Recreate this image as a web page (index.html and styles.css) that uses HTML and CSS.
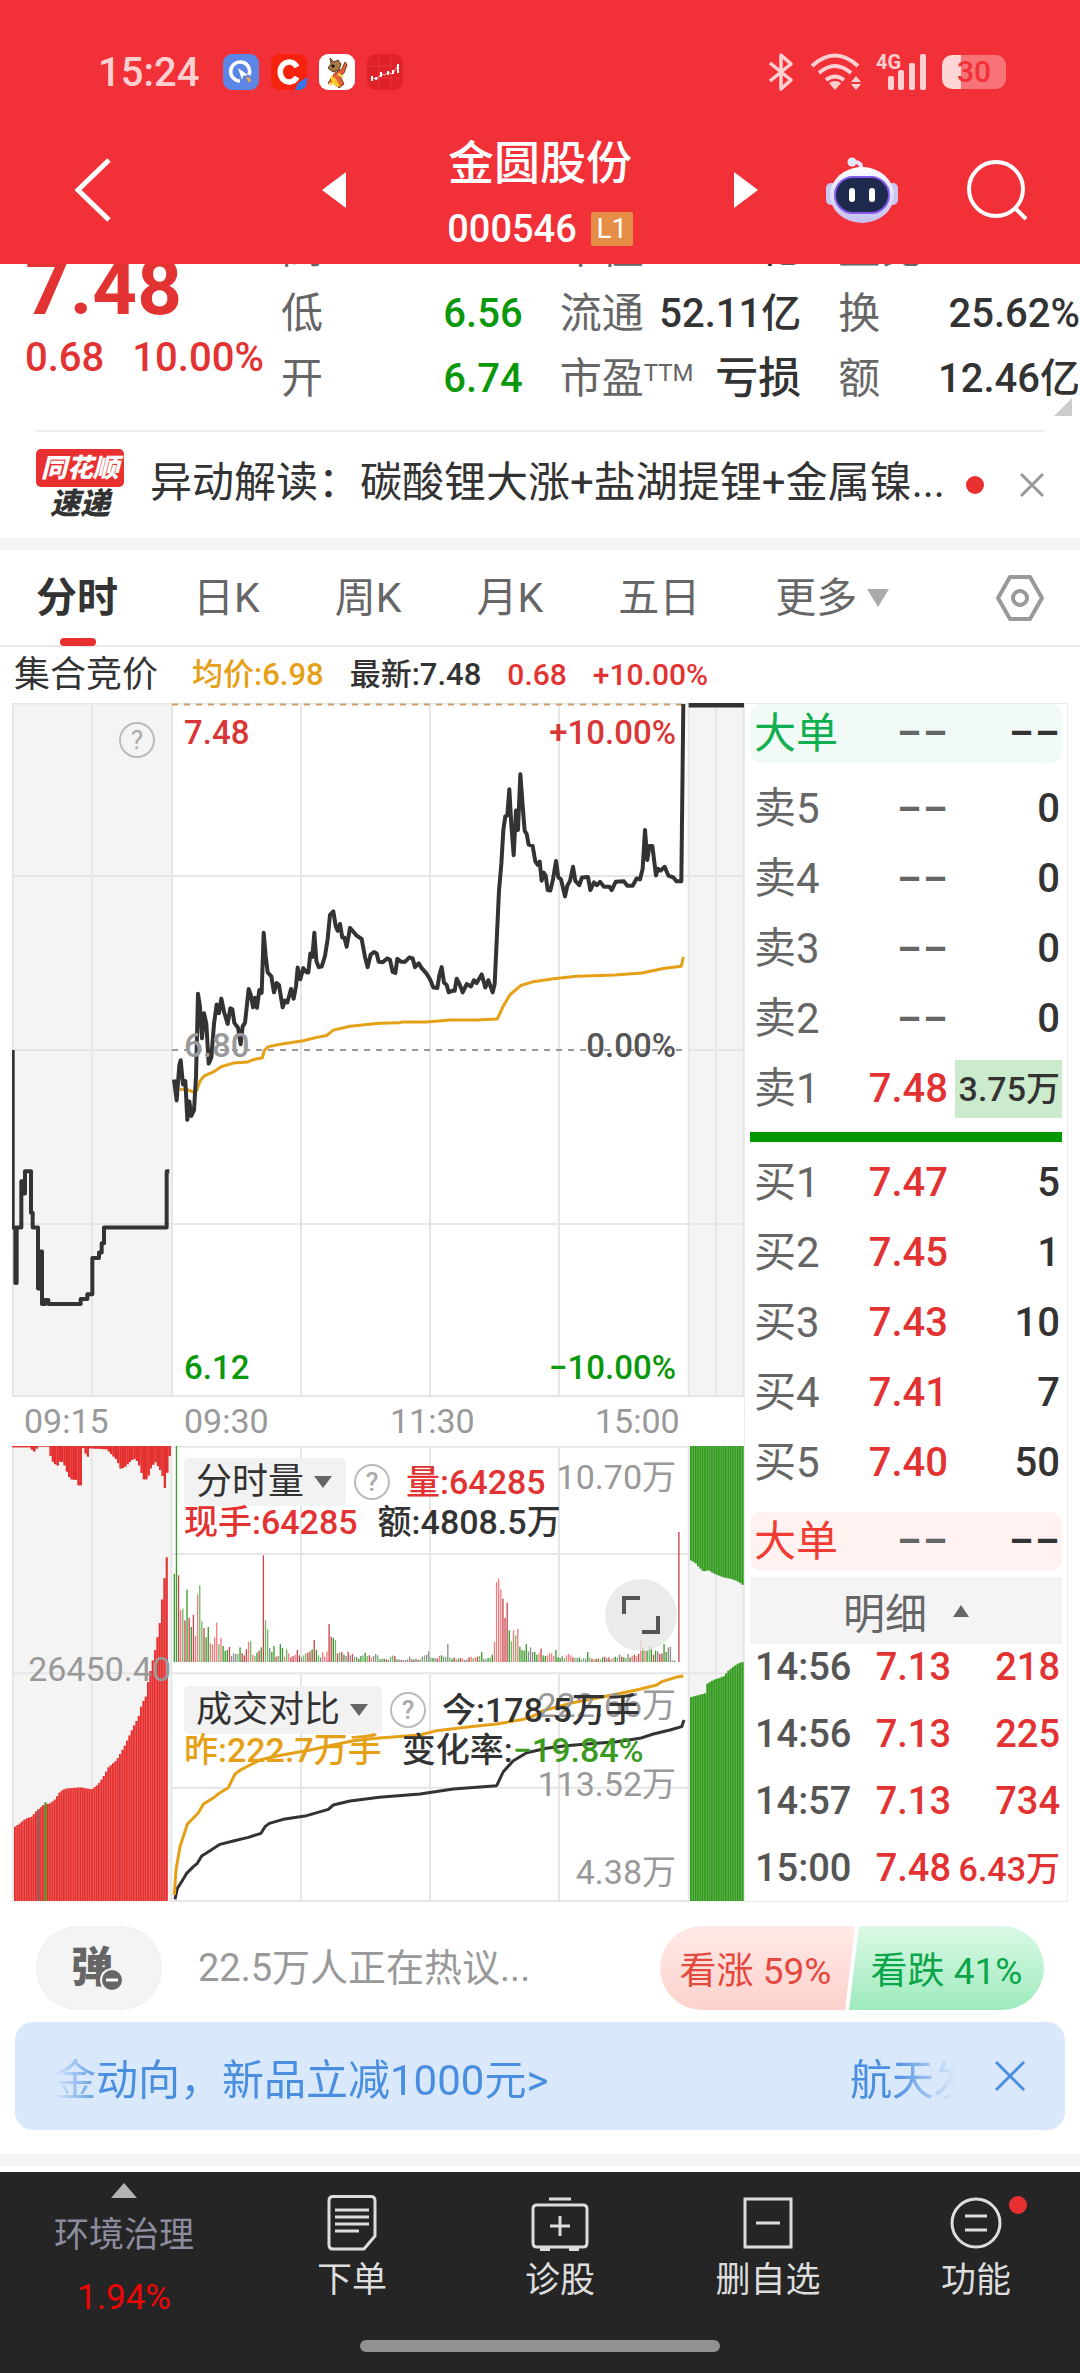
FILE: index.html
```html
<!DOCTYPE html>
<html lang="zh-CN">
<head>
	<meta charset="UTF-8">
	<meta name="viewport" content="width=device-width, initial-scale=1">
	<title>金圆股份 000546</title>
	<link rel="stylesheet" href="styles.css">
</head>
<body>
	<header class="header">
		<div class="status">
			<span class="clock">15:24</span>
			<svg class="app" viewBox="0 0 36 36"><rect width="36" height="36" rx="9" fill="#5b86e5"/><path d="M26 21A9.500 9.500 0 1 0 17 27" fill="none" stroke="#fff" stroke-width="3.500"/><path d="M15 14l10 7-5 1-1 4z" fill="#fff"/><path d="M23 23q5 0 5 3t-3 2z" fill="#e8a64e"/></svg>
			<svg class="app" viewBox="0 0 36 36"><rect width="36" height="36" rx="9" fill="#f5220d"/><path d="M26 13A9 10 0 1 0 26 23" fill="none" stroke="#fff" stroke-width="5.500"/><path d="M24 36l3-7 9-6v4q0 9-9 9z" fill="#3577e8"/></svg>
			<svg class="app" viewBox="0 0 36 36"><rect width="36" height="36" rx="9" fill="#fff"/><path d="M11 4l4 4 4-2 3 4-2 6-6 2-5-4 3-4z" fill="#a87846" stroke="#5b3a1d"/><path d="M16 19l7-4 3-7 2 3-3 8-4 3 4 8-5 4-5-7-3 4-3-2z" fill="#e8603a" stroke="#7a3a12"/><path d="M12 21l5 4 4 7-4 1-5-7z" fill="#ffc928"/><circle cx="14" cy="12" r="1.500"/><path d="M19 20l5 3M10 30l5-1" stroke="#ffd94d" stroke-width="2.500"/></svg>
			<svg class="app" viewBox="0 0 36 36"><rect width="36" height="36" rx="9" fill="#df2128"/><path d="M12 0v36M24 0v36M0 12h36M0 24h36" stroke="#e8454a" stroke-width=".6"/><path d="M5 24l5 1 4-5 4 1 3-3 4 2 3-4 3-4" fill="none" stroke="#ffb9ba"/><path d="M4 22h2v5H4zM8 23h2v3H8zM13 18h2v5h-2zM20 17h2v4h-2zM25 16h2v4h-2zM30 10h2v9h-2z" fill="#fff"/></svg>
			<div class="signals">
				<svg width="26" height="38" viewBox="0 0 26 38"><path d="M2 10l21 17-10 9V2l10 9L2 28" fill="none" stroke="#ffd0d1" stroke-width="3.500" stroke-linejoin="round"/></svg>
				<svg width="52" height="38" viewBox="0 0 52 38"><g fill="none" stroke="#ffd0d1" stroke-width="4"><path d="M2 13q23-21 46 0"/><path d="M9 20q16-14 32 0"/><path d="M16 27q9-7 18 0"/></g><path d="M25 37l-6-7q6-4 12 0zM46 23l5 6H41zM46 37l5-6H41z" fill="#ffd0d1"/></svg>
				<span class="cell"><small>4G</small><svg width="48" height="38" viewBox="0 0 48 38" fill="#ffd0d1"><rect x="10" y="23" width="6" height="14" rx="2"/><rect x="20" y="17" width="6" height="20" rx="2"/><rect x="31" y="10" width="6" height="27" rx="2"/><rect x="42" y="1" width="6" height="36" rx="2"/></svg></span>
				<span class="battery">30</span>
			</div>
		</div>
		<nav class="top-nav">
			<button class="icon-btn back" aria-label="返回"><svg width="38" height="66" viewBox="0 0 38 66"><path d="M35 3L4 33l31 30" fill="none" stroke="#fff" stroke-width="5"/></svg></button>
			<div class="switcher">
				<button class="icon-btn" aria-label="上一只"><svg width="24" height="36"><path d="M24 0v36L0 18z" fill="#fff"/></svg></button>
				<div class="stock">
					<h1>金圆股份</h1>
					<p>000546 <span class="badge">L1</span></p>
				</div>
				<button class="icon-btn" aria-label="下一只"><svg width="24" height="36"><path d="M0 0v36l24-18z" fill="#fff"/></svg></button>
			</div>
			<div class="actions">
				<button class="icon-btn" aria-label="智能助手"><svg width="72" height="66" viewBox="0 0 72 66">
					<defs><linearGradient id="shell" x2="0" y2="1"><stop stop-color="#fff"/><stop offset="1" stop-color="#c3c0ef"/></linearGradient></defs>
					<path d="M35 12q1-7-7-7" fill="none" stroke="#e6e4f8" stroke-width="4"/><circle cx="26" cy="5" r="4.500" fill="#e9e8fb"/>
					<rect x="0" y="26" width="10" height="22" rx="5" fill="#c9c7f2"/><rect x="62" y="26" width="10" height="22" rx="5" fill="#c9c7f2"/>
					<ellipse cx="36" cy="38" rx="32" ry="28" fill="url(#shell)"/>
					<rect x="9" y="20" width="54" height="36" rx="18" fill="#1e2a4d" stroke="#8659ee" stroke-width="2"/>
					<path d="M26 34v8M46 34v8" stroke="#fff" stroke-width="6" stroke-linecap="round"/>
				</svg></button>
				<button class="icon-btn" aria-label="搜索"><svg width="62" height="62" viewBox="0 0 62 62" fill="none" stroke="#fff" stroke-width="4"><circle cx="30" cy="30" r="27"/><path d="M49 49l11 11"/></svg></button>
			</div>
		</nav>
	</header>

	<section class="quote">
		<div class="price">
			<strong>7.48</strong>
			<p><span>0.68</span><span>10.00%</span></p>
		</div>
		<dl class="stats">
			<div><dt>高</dt><dd class="up">7.48</dd></div>
			<div><dt>市值</dt><dd>58.28亿</dd></div>
			<div><dt>量比</dt><dd class="up">1.30</dd></div>
			<div><dt>低</dt><dd class="down">6.56</dd></div>
			<div><dt>流通</dt><dd>52.11亿</dd></div>
			<div><dt>换</dt><dd>25.62%</dd></div>
			<div><dt>开</dt><dd class="down">6.74</dd></div>
			<div><dt>市盈<sup>TTM</sup></dt><dd class="loss">亏损</dd></div>
			<div><dt>额</dt><dd>12.46亿</dd></div>
		</dl>
		<i class="corner"></i>
	</section>

	<section class="news">
		<div class="logo"><b>同花顺</b><em>速递</em></div>
		<a href="#">异动解读：碳酸锂大涨+盐湖提锂+金属镍...</a>
		<i class="dot"></i>
		<button class="icon-btn" aria-label="关闭"><svg width="24" height="24"><path d="M1 1l22 22M23 1L1 23" stroke="#999" stroke-width="3"/></svg></button>
	</section>

	<nav class="tabs">
		<a href="#" class="active">分时</a>
		<a href="#">日K</a>
		<a href="#">周K</a>
		<a href="#">月K</a>
		<a href="#">五日</a>
		<a href="#" class="more">更多</a>
		<button class="icon-btn setting" aria-label="设置"><svg width="48" height="46" viewBox="0 0 48 46" fill="none" stroke="#999" stroke-width="4" stroke-linejoin="round"><path d="M14 2h20l12 21-12 21H14L2 23z"/><circle cx="24" cy="23" r="7"/></svg></button>
	</nav>

	<p class="summary">
		<span class="auction">集合竞价</span>
		<span class="avg">均价:6.98</span>
		<span>最新:7.48</span>
		<span class="up">0.68</span>
		<span class="up">+10.00%</span>
	</p>

	<main class="board">
		<section class="charts">
			<div class="plot price-plot">
				<svg id="priceChart" viewBox="36 28 2196 1432" preserveAspectRatio="none">
					<path class="shade" d="M36 28H516V1460H36zM2066 28H2232V1460H2066z"/>
					<path class="grid" d="M38 28V1460M275 28V1460M516 28V1460M903 28V1460M1290 28V1460M1677 28V1460M2066 28V1460M2148 28V1460M2230 28V1460M36 29H2232M36 385H2232M36 744H516M2066 744H2232M36 1103H2232M36 1458H2232"/>
					<path class="limit" d="M516 31H2046"/>
					<path class="zero" d="M516 744H2046"/>
					<path class="line" d="M38 744V1110H46V1225H50V1110H64V1015H68V1040H75V994H93V1080H98V1110H114V1236H122V1160H126V1268H135V1260H145V1268H242V1258H262V1248H277V1173H297V1162H305V1143H312V1110H500V994H508"/>
					<path class="line top" d="M2066 31H2232"/>
				</svg>
				<span class="tag tl up">7.48</span>
				<span class="tag tr up">+10.00%</span>
				<span class="tag ml">6.80</span>
				<span class="tag mr">0.00%</span>
				<span class="tag bl down">6.12</span>
				<span class="tag br down">−10.00%</span>
				<button class="help auction-help" aria-label="说明">?</button>
			</div>
			<div class="times"><span>09:15</span><span>09:30</span><span>11:30</span><span>15:00</span></div>
			<div class="plot index-plot">
				<svg id="indexChart" viewBox="36 48 2196 1368">
					<path class="shade" d="M36 48H516V1416H36zM2064 48H2232V1416H2064z"/>
					<path class="grid" d="M38 48V1416M275 48V1416M514 48V1416M903 48V696M1290 48V696M1677 48V696M903 733V1416M1290 733V1416M1677 733V1416M2066 48V1416M2148 48V1416M2230 48V1416M36 50H2232M516 372H2064M36 730H2232M516 1073H2064M516 1413H2064"/>
				</svg>
				<span class="tag auction-value">26450.40</span>
				<div class="panel volume">
					<p><button class="picker">分时量</button><button class="help" aria-label="说明">?</button><span class="up">量:64285</span></p>
					<p><span class="up">现手:64285</span><span>额:4808.5万</span></p>
					<span class="tag scale-top">10.70万</span>
					<button class="expand" aria-label="放大"><svg width="38" height="38" fill="none" stroke="#555" stroke-width="4"><path d="M2 18V2h16M36 20v16H20"/></svg></button>
				</div>
				<div class="panel compare">
					<span class="tag scale-top">222.66万</span>
					<span class="tag scale-mid">113.52万</span>
					<span class="tag scale-low">4.38万</span>
					<p><button class="picker">成交对比</button><button class="help" aria-label="说明">?</button><span>今:178.5万手</span></p>
					<p><span class="avg">昨:222.7万手</span><span>变化率:<b>−19.84%</b></span></p>
				</div>
			</div>
		</section>

		<section class="book">
			<table class="big sell"><tr><th>大单</th><td class="none">−−</td><td class="none">−−</td></tr></table>
			<table class="sells">
				<tr><th>卖5</th><td class="none">−−</td><td>0</td></tr>
				<tr><th>卖4</th><td class="none">−−</td><td>0</td></tr>
				<tr><th>卖3</th><td class="none">−−</td><td>0</td></tr>
				<tr><th>卖2</th><td class="none">−−</td><td>0</td></tr>
				<tr><th>卖1</th><td>7.48</td><td><span class="hot">3.75万</span></td></tr>
			</table>
			<div class="ratio"></div>
			<table class="buys">
				<tr><th>买1</th><td>7.47</td><td>5</td></tr>
				<tr><th>买2</th><td>7.45</td><td>1</td></tr>
				<tr><th>买3</th><td>7.43</td><td>10</td></tr>
				<tr><th>买4</th><td>7.41</td><td>7</td></tr>
				<tr><th>买5</th><td>7.40</td><td>50</td></tr>
			</table>
			<table class="big buy"><tr><th>大单</th><td class="none">−−</td><td class="none">−−</td></tr></table>
			<button class="detail">明细</button>
			<table class="trades">
				<tr><th>14:56</th><td>7.13</td><td>218</td></tr>
				<tr><th>14:56</th><td>7.13</td><td>225</td></tr>
				<tr><th>14:57</th><td>7.13</td><td>734</td></tr>
				<tr><th>15:00</th><td>7.48</td><td><small>6.43万</small></td></tr>
			</table>
		</section>
	</main>

	<section class="talk">
		<button class="danmu" aria-label="弹幕">弹<svg width="24" height="24"><circle cx="12" cy="12" r="11" fill="#666" stroke="#f4f4f4" stroke-width="2"/><path d="M6 12h12" stroke="#fff" stroke-width="3"/></svg></button>
		<input type="text" aria-label="评论" placeholder="22.5万人正在热议...">
		<div class="vote">
			<button class="rise">看涨 59%</button>
			<button class="fall">看跌 41%</button>
		</div>
	</section>

	<section class="notice">
		<div class="marquee"><a href="#">金动向，新品立减1000元&gt;</a><a href="#">航天发</a></div>
		<button class="icon-btn" aria-label="关闭"><svg width="32" height="32"><path d="M2 2l28 28M30 2L2 30" stroke="#4a8fdf" stroke-width="3"/></svg></button>
	</section>

	<footer class="footer">
		<nav class="bottom-nav">
			<a href="#" class="sector"><i></i><span>环境治理</span><b>1.94%</b></a>
			<a href="#"><svg width="50" height="56" viewBox="0 0 50 56"><path d="M6 1.500h38q4 0 4 4V41L37 54H6q-4 0-4-4V5.500q0-4 4-4z"/><path d="M8 15h34M8 22h34M8 29h34M8 36h24"/></svg>下单</a>
			<a href="#"><svg width="58" height="56" viewBox="0 0 58 56"><path d="M18 4h22M6 10h46q4 0 4 4v34q0 4-4 4H6q-4 0-4-4V14q0-4 4-4zM29 21v20M19 31h20"/><path d="M9 54h10M38 54h10" stroke-width="4"/></svg>诊股</a>
			<a href="#"><svg width="50" height="56" viewBox="0 0 50 56"><path d="M2 4h46v48H2zM13 28h24"/></svg>删自选</a>
			<a href="#" class="func"><svg width="52" height="56" viewBox="0 0 52 56"><circle cx="26" cy="28" r="24"/><path d="M15 21h22M15 35h22"/></svg>功能<i class="dot"></i></a>
		</nav>
		<div class="home-bar"></div>
	</footer>
	<script src="chart.js"></script>
</body>
</html>
```
FILE: styles.css
```css
*{
	padding:0;
	margin:0;
	box-sizing:border-box;
}
body{
	background:#fff;
	color:#333;
	font-family:Roboto,"Noto Sans CJK SC",sans-serif;
	font-size:36px;
	overflow-x:hidden;
}
a{
	color:inherit;
	text-decoration:none;
}
button,input{
	font:inherit;
	color:inherit;
	border:none;
	background:none;
	outline:none;
}
svg{
	display:block;
}
.icon-btn{
	display:block;
	flex:none;
}
.up{
	color:#e33232;
}
.down{
	color:#099809;
}
.avg{
	color:#e6a017;
}
.dot{
	width:18px;
	height:18px;
	border-radius:50%;
	background:#e93030;
	flex:none;
}

/* header */
.header{
	position:relative;
	z-index:2;
	background:#f23037;
	color:#fff;
}
.status{
	display:flex;
	align-items:center;
	gap:12px;
	height:116px;
	padding:28px 74px 0 98px;
}
.clock{
	font-size:40px;
	font-weight:500;
	color:#ffd0d1;
	margin-right:12px;
}
.app{
	width:36px;
	height:36px;
}
.signals{
	display:flex;
	align-items:center;
	gap:16px;
	margin-left:auto;
}
.cell{
	position:relative;
}
.cell small{
	position:absolute;
	left:-2px;
	top:0;
	font-size:20px;
	line-height:18px;
	font-weight:700;
	color:#ffd0d1;
}
.battery{
	width:64px;
	height:34px;
	line-height:34px;
	border-radius:10px;
	background:linear-gradient(90deg,#ffd5d6 30%,#f77377 30%);
	color:#f23037;
	font-size:30px;
	font-weight:500;
	text-align:center;
}
.top-nav{
	display:grid;
	grid-template-columns:1fr 436px 1fr;
	align-items:center;
	height:148px;
	padding:0 52px 0 74px;
}
.switcher{
	display:flex;
	justify-content:space-between;
	align-items:center;
	margin-left:-11px;
	margin-right:11px;
}
.stock{
	padding-top:12px;
	text-align:center;
}
.stock h1{
	font-size:46px;
	line-height:66px;
	font-weight:500;
}
.stock p{
	display:flex;
	align-items:center;
	justify-content:center;
	gap:14px;
	font-size:38px;
	line-height:66px;
	font-weight:500;
}
.badge{
	width:42px;
	height:34px;
	line-height:34px;
	background:#e68d47;
	border-radius:2px;
	font-size:28px;
	font-weight:400;
}
.actions{
	display:flex;
	justify-content:flex-end;
	align-items:center;
	gap:68px;
}

/* quote */
.quote{
	position:relative;
	display:flex;
	margin-top:-48px;
	padding-bottom:19px;
}
.price{
	width:281px;
	padding:30px 0 0 25px;
	color:#e33232;
}
.price strong{
	display:block;
	font-size:78px;
	line-height:84px;
	font-weight:700;
}
.price p{
	display:flex;
	gap:28px;
	font-size:40px;
	line-height:56px;
	font-weight:500;
}
.stats{
	flex:1;
	display:grid;
	grid-template-columns:repeat(3,1fr);
	column-gap:37px;
	white-space:nowrap;
}
.stats div{
	display:flex;
	justify-content:space-between;
	font-size:42px;
	line-height:65px;
}
.stats dt{
	color:#666;
}
.stats dd{
	font-size:40px;
	font-weight:500;
}
.stats .loss{
	font-size:43px;
}
.stats sup{
	font-size:24px;
	line-height:24px;
	vertical-align:12px;
}
.corner{
	position:absolute;
	right:8px;
	bottom:14px;
	border-left:18px solid transparent;
	border-bottom:18px solid #ccc;
}

/* news */
.news{
	display:flex;
	align-items:center;
	height:108px;
	margin:0 36px;
	border-top:2px solid #eee;
}
.news a{
	flex:1;
	white-space:nowrap;
	font-size:42px;
	line-height:60px;
	padding-bottom:4px;
}
.news .icon-btn{
	margin-left:36px;
}
.logo{
	width:88px;
	margin-right:26px;
	text-align:center;
	font-weight:900;
	font-style:italic;
}
.logo b{
	display:block;
	background:#e83030;
	color:#fff;
	border-radius:5px;
	font-size:26px;
	line-height:38px;
	font-weight:900;
}
.logo em{
	display:block;
	font-size:30px;
	line-height:34px;
}

/* tabs */
.tabs{
	display:flex;
	align-items:center;
	gap:75px;
	height:109px;
	padding:0 36px;
	border-top:12px solid #f4f4f4;
	border-bottom:2px solid #e8e8e8;
	font-size:41px;
	line-height:96px;
	color:#666;
}
.tabs .active{
	position:relative;
	color:#333;
	font-weight:700;
}
.tabs .active::after{
	content:"";
	position:absolute;
	left:24px;
	bottom:0;
	width:36px;
	height:8px;
	border-radius:4px;
	background:#e93030;
}
.more{
	display:flex;
	align-items:center;
	gap:10px;
}
.more::after{
	content:"";
	border:11px solid transparent;
	border-top:18px solid #aaa;
	border-bottom:0;
}
.setting{
	margin-left:auto;
}

.summary{
	display:flex;
	gap:26px;
	padding-left:14px;
	font-size:31px;
	line-height:56px;
	font-weight:500;
}
.summary .up{
	font-size:30px;
}
.auction{
	font-size:36px;
	font-weight:400;
	margin-right:8px;
}

/* charts */
.board{
	display:grid;
	grid-template-columns:732fr 324fr;
	margin:0 12px;
}
.charts,.book{
	min-width:0;
}
.plot{
	position:relative;
}
.plot > svg{
	width:100%;
}
#priceChart{
	height:694px;
}
.shade{
	fill:#f4f4f4;
}
.grid,.line,.avg-line,.limit,.zero{
	fill:none;
	vector-effect:non-scaling-stroke;
	stroke-linejoin:round;
}
.grid{
	stroke:#e6e6e6;
	stroke-width:2px;
}
.line{
	stroke:#333;
	stroke-width:4px;
}
#indexChart .line{
	stroke-width:3px;
}
#priceChart .top{
	stroke-width:6px;
}
.avg-line{
	stroke:#e6a017;
	stroke-width:3px;
}
.limit{
	stroke:#c9a067;
	stroke-width:2px;
	stroke-dasharray:6 6;
}
.zero{
	stroke:#999;
	stroke-width:2px;
	stroke-dasharray:6 6;
}
.tag{
	position:absolute;
	font-size:34px;
	line-height:40px;
	color:#999;
}
.price-plot .tag{
	font-size:33px;
	font-weight:500;
}
.price-plot .up{
	color:#d93636;
}
.price-plot .down{
	color:#099809;
}
.tl,.ml,.bl{
	left:172px;
}
.tr,.mr,.br{
	right:68px;
}
.tl,.tr{
	top:10px;
}
.ml,.mr{
	top:323px;
}
.bl,.br{
	bottom:9px;
}
.price-plot .mr{
	color:#555;
}
.help{
	width:36px;
	height:36px;
	line-height:32px;
	border:2px solid #bbb;
	border-radius:50%;
	color:#aaa;
	font-size:26px;
	text-align:center;
}
.auction-help{
	position:absolute;
	left:107px;
	top:19px;
}
.times{
	display:grid;
	grid-template-columns:172fr 206fr 205fr 149fr;
	font-size:34px;
	line-height:49px;
	color:#999;
}
.times span:first-child{
	padding-left:12px;
}
.auction-value{
	right:573px;
	top:203px;
}
.panel{
	position:absolute;
	left:162px;
	right:56px;
	padding:12px 0 0 10px;
	font-weight:500;
}
.volume{
	top:0;
	height:216px;
}
.compare{
	top:228px;
	height:228px;
}
.panel p{
	position:relative;
	display:flex;
	align-items:center;
	gap:20px;
	line-height:40px;
	height:32px;
	font-size:34px;
	white-space:nowrap;
}
.panel p:first-of-type{
	height:48px;
}
.panel p b{
	color:#3a9b1f;
	font-weight:500;
}
.picker{
	display:flex;
	align-items:center;
	gap:10px;
	height:48px;
	padding:0 14px 0 12px;
	border-radius:5px;
	background:#f2f2f2;
	font-size:36px;
	font-weight:400;
}
.picker::after{
	content:"";
	border:9px solid transparent;
	border-top:12px solid #666;
	border-bottom:0;
}
.picker + .help{
	margin-left:-12px;
}
.panel .help + span{
	margin-left:-4px;
}
.scale-top,.scale-mid,.scale-low{
	right:12px;
	font-weight:400;
}
.scale-top{
	top:11px;
}
.scale-mid{
	top:90px;
}
.scale-low{
	top:178px;
}
.expand{
	position:absolute;
	right:11px;
	bottom:11px;
	width:72px;
	height:72px;
	padding:17px;
	border-radius:50%;
	background:rgba(230,230,230,.8);
}

/* order book */
.book{
	border:1px solid #eaeaea;
	padding:0 5px;
}
.book table{
	width:100%;
	border-collapse:collapse;
	table-layout:fixed;
	font-size:40px;
	font-weight:500;
}
.book th{
	width:92px;
	padding-left:4px;
	text-align:left;
	font-size:42px;
	font-weight:400;
	color:#666;
	white-space:nowrap;
}
.book td{
	padding-right:2px;
	text-align:right;
	white-space:nowrap;
}
.book td:nth-child(2){
	width:108px;
	color:#e33232;
}
.book .none:nth-child(2){
	color:#666;
}
.none{
	font-size:46px;
}
.book .big{
	border-radius:12px;
	line-height:59px;
}
.big.sell{
	background:#f1faf6;
	margin-bottom:11px;
}
.big.buy{
	background:#fff2f1;
	margin:14px 0 6px;
}
.big.sell th{
	color:#10b050;
}
.big.buy th{
	color:#f03c32;
}
.sells tr,.buys tr{
	height:70px;
	line-height:58px;
}
.hot{
	display:block;
	margin:0 -2px 0 5px;
	padding-right:2px;
	background:#cceacc;
	font-size:34px;
}
.ratio{
	height:10px;
	margin:8px 0 6px;
	background:#009800;
}
.detail{
	display:flex;
	align-items:center;
	justify-content:center;
	gap:26px;
	width:100%;
	height:67px;
	background:#f4f4f4;
	color:#666;
	font-size:42px;
}
.detail::after{
	content:"";
	border:8px solid transparent;
	border-bottom:12px solid #666;
	border-top:0;
}
.trades tr{
	height:67px;
	line-height:46px;
	vertical-align:top;
}
.book .trades{
	font-size:38px;
	margin-bottom:-16px;
}
.book .trades th{
	width:100px;
	padding-left:5px;
	font-size:38px;
	color:#555;
	font-weight:500;
}
.book .trades td{
	color:#e33232;
}
.book .trades td:nth-child(2){
	width:103px;
}
.trades small{
	font-size:34px;
}

/* talk */
.talk{
	display:flex;
	align-items:center;
	gap:36px;
	padding:24px 36px 12px;
}
.danmu{
	position:relative;
	width:126px;
	height:84px;
	border:1px solid #eee;
	border-radius:42px;
	background:#f4f4f4;
	color:#666;
	font-size:42px;
	font-weight:900;
	line-height:80px;
	padding-right:14px;
}
.danmu svg{
	position:absolute;
	left:63px;
	top:41px;
}
.talk input{
	flex:1;
	min-width:0;
	font-size:38px;
	height:60px;
}
.talk input::placeholder{
	color:#999;
}
.vote{
	display:flex;
	width:384px;
	height:84px;
	border-radius:42px;
	overflow:hidden;
	font-size:37px;
	white-space:nowrap;
}
.rise{
	width:195px;
	margin-right:-6px;
	padding-right:4px;
	background:linear-gradient(#ffeae8,#fdd2cc);
	color:#e5493e;
	clip-path:polygon(0 0,100% 0,185px 100%,0 100%);
}
.fall{
	flex:1;
	background:linear-gradient(#dbf9e6,#9eebbd);
	color:#0ba54a;
	clip-path:polygon(10px 0,100% 0,100% 100%,0 100%);
}

/* notice */
.notice{
	display:flex;
	align-items:center;
	height:108px;
	margin:0 15px 24px;
	padding:0 39px;
	border-radius:18px;
	background:#dae8fb;
	color:#4a8fdf;
	font-size:42px;
}
.marquee{
	flex:1;
	display:flex;
	justify-content:space-between;
	margin-right:40px;
	overflow:hidden;
	white-space:nowrap;
	-webkit-mask-image:linear-gradient(90deg,transparent,#000 50px,#000 calc(100% - 60px),transparent);
	mask-image:linear-gradient(90deg,transparent,#000 50px,#000 calc(100% - 60px),transparent);
}
.marquee a:last-child{
	margin-right:-22px;
}

/* footer */
.footer{
	border-top:12px solid #f4f4f4;
}
.bottom-nav{
	display:grid;
	grid-template-columns:248fr 208fr 208fr 208fr 208fr;
	height:168px;
	margin-top:6px;
	background:#252525;
	color:#ddd;
	font-size:35px;
}
.bottom-nav a{
	position:relative;
	display:flex;
	flex-direction:column;
	align-items:center;
	padding-top:23px;
	line-height:56px;
}
.bottom-nav svg{
	fill:none;
	stroke:#ddd;
	stroke-width:3px;
	margin-bottom:2px;
}
.bottom-nav .sector{
	padding-top:11px;
	color:#8c8c9f;
}
.sector i{
	border:13px solid transparent;
	border-bottom:15px solid #b4b4b4;
	border-top:0;
	margin-bottom:10px;
}
.sector b{
	color:#f00505;
	font-weight:400;
	line-height:68px;
}
.func .dot{
	position:absolute;
	top:24px;
	left:calc(50% + 33px);
}
.home-bar{
	height:33px;
	background:#252525;
}
.home-bar::before{
	content:"";
	display:block;
	width:360px;
	height:12px;
	margin:0 auto;
	border-radius:6px;
	background:#919191;
}
```
FILE: chart.js
```js
var NS='http://www.w3.org/2000/svg',
	priceChart=document.getElementById('priceChart'),
	indexChart=document.getElementById('indexChart');

// 坐标都是 x,y 连写
var avg='540,826 556,824 580,831 590,828 600,808 612,798 643,788 665,778 700,771 742,769 760,764 787,760 793,745 805,737 850,731 910,725 950,718 980,714 1000,703 1050,695 1138,689 1198,688 1206,686 1278,686 1352,682 1430,682 1492,680 1510,653 1530,630 1562,611 1600,603 1660,597 1730,592 1845,589 1925,585 1990,576 2044,571 2050,552';
var price='522,805 530,848 538,775 542,765 549,815 556,808 562,888 568,850 574,880 582,868 588,800 594,628 600,655 606,720 612,668 619,690 626,772 634,760 642,690 650,650 657,668 664,638 672,665 683,690 691,658 697,660 703,688 714,698 722,732 728,695 735,688 746,618 753,632 759,656 765,636 771,657 778,620 785,626 791,502 797,550 803,584 814,592 822,625 830,606 837,610 848,656 855,642 862,646 873,618 881,638 888,612 893,574 901,598 910,575 918,583 925,584 931,545 937,552 943,502 949,560 956,573 965,572 975,550 983,515 990,465 1000,458 1007,488 1013,498 1020,484 1027,512 1033,512 1040,531 1050,492 1060,500 1070,508 1085,515 1095,552 1103,573 1112,547 1122,542 1130,545 1136,562 1148,563 1162,555 1170,558 1178,583 1186,585 1192,556 1203,562 1215,562 1228,553 1238,555 1245,573 1256,565 1265,575 1278,585 1290,598 1300,615 1312,616 1318,590 1325,573 1332,605 1340,610 1346,625 1356,622 1364,622 1370,597 1378,607 1388,625 1400,608 1413,613 1422,600 1430,606 1445,588 1456,615 1465,600 1478,625 1484,608 1490,520 1497,415 1504,360 1510,290 1516,262 1522,260 1528,206 1534,280 1541,342 1548,250 1554,290 1561,175 1568,240 1574,292 1580,298 1586,320 1598,323 1606,355 1613,362 1619,355 1625,395 1631,378 1637,384 1643,414 1651,415 1659,392 1668,354 1675,388 1683,392 1695,427 1702,405 1710,395 1719,366 1726,395 1738,404 1746,388 1764,387 1771,414 1782,398 1791,404 1800,397 1812,407 1828,407 1835,414 1847,397 1872,396 1882,405 1898,405 1910,390 1920,392 1928,370 1935,290 1942,352 1948,323 1957,323 1964,362 1968,384 1974,370 1982,374 1994,366 2005,384 2020,388 2030,396 2044,396 2050,30';
var yesterday='523,1395 528,1320 540,1250 562,1183 595,1148 610,1123 645,1100 660,1088 685,1073 705,1032 725,1018 750,1005 780,990 830,978 930,960 1000,945 1060,932 1138,924 1260,915 1310,902 1410,890 1490,882 1570,868 1600,858 1630,842 1710,820 1810,800 1910,780 1970,765 1985,755 2035,740 2050,738';
var today='525,1408 532,1375 545,1355 560,1330 580,1310 592,1300 605,1278 630,1262 660,1243 700,1233 745,1222 783,1210 795,1190 808,1180 850,1168 920,1157 985,1138 1000,1125 1050,1113 1138,1102 1260,1092 1360,1077 1490,1067 1510,1025 1540,992 1580,968 1640,955 1690,948 1760,942 1850,935 1920,925 1960,912 2010,900 2045,890 2052,870';

// 集合竞价两侧的柱子
var leftUp='42,1192 60,1180 75,1167 95,1160 110,1142 130,1125 150,1120 165,1108 180,1085 195,1076 240,1072 275,1078 295,1062 310,1040 325,1012 350,990 375,945 400,890 415,862 425,822 437,800 445,750 455,705 465,660 475,605 482,560 489,470 496,425 503,350';
var leftDown='36,52 92,52 99,68 106,60 113,50 146,50 150,75 160,100 175,108 180,92 190,98 200,125 210,148 230,150 235,166 242,166 248,52 262,85 268,55 320,58 340,80 350,90 362,118 375,110 395,90 405,86 415,100 430,148 442,148 450,118 465,95 480,120 490,145 497,195 504,78';
var rightDown='2070,390 2085,398 2095,410 2110,425 2125,420 2140,430 2170,442 2195,447 2215,455 2228,465';
var rightUp='2070,802 2115,790 2120,762 2140,750 2170,740 2185,722 2200,710 2215,700 2228,696';

// 每分钟成交量, r涨 g跌 k平, p l 是浅色
var volume='g265 g648 r260 p155 l160 r125 g217 r132 g105 r142 p78 p203 l230 l122 r102 g74 g105 p56 p52 p74 p118 l54 p72 g48 g34 g36 r45 k18 k26 k24 l24 g44 r26 r20 r38 p60 l62 p22 l18 g28 r34 g44 r320 l125 l98 k42 g30 g48 r16 k18 g54 g42 p16 l38 p26 r14 r18 p22 r36 r20 k14 l20 l26 r28 r32 g38 r66 g36 l20 k14 p30 p16 p32 r114 r76 g72 l66 r26 l28 r30 g22 k18 r30 k20 r24 l16 k16 g10 g18 l20 g28 l18 r20 p14 k18 k24 l20 g8 k10 g10 r8 k7 l16 l20 r18 g8 k8 r6 k6 k6 k8 k16 r8 g8 k10 r7 l8 k16 l20 k22 k32 l14 g12 k12 r10 p18 g20 k16 l16 k54 l14 g10 r14 p8 g10 r12 p10 k6 k8 r14 p16 l12 p14 r16 l18 g30 k10 k8 g12 l14 g22 p60 p240 p250 p218 r190 r132 r178 g95 l62 p95 l80 p100 g46 g36 g34 g54 k32 k44 k30 g30 g22 p26 r40 g20 g18 p20 p26 p26 p18 g36 g14 g12 k18 l12 p20 p24 p20 r14 l12 k12 g14 k8 l12 k10 g30 l14 r10 p8 g10 r10 l8 g14 r16 k12 r14 l8 p12 g16 l14 k22 r16 g14 l12 k24 g14 p18 r22 p18 r24 p66 g46 p34 g34 l46 g46 r22 g34 k32 r24 r26 g54 g30 k44 k46 k5 g4 r0 r390';
var colors={r:'#c8474a',p:'#f47c7e',g:'#3b9a2d',l:'#73b96a',k:'#8b8b8b'};

function add(parent,tag,attrs){
	var el=document.createElementNS(NS,tag);
	for(var k in attrs){
		el.setAttribute(k,attrs[k]);
	}
	parent.appendChild(el);
}
function rect(x,y,w,h,fill){
	add(indexChart,'rect',{x:x,y:y,width:w,height:h,fill:fill});
}
function bars(str,from,to,base,color,light){
	var pts=str.split(' ').map(p=>p.split(',').map(Number));
	for(var x=from;x<to;x+=7){
		var n=pts.findIndex(p=>p[0]>x+3);
		if(n<0){
			n=pts.length-1;
		}
		var a=pts[Math.max(n-1,0)],b=pts[n],
			t=a===b?0:Math.min(1,(x+3-a[0])/(b[0]-a[0])),
			y=a[1]+(b[1]-a[1])*t;
		rect(x,Math.min(y,base),7,Math.abs(base-y),color);
		rect(x+5,Math.min(y,base),2,Math.abs(base-y),light);
	}
}

add(priceChart,'polyline',{points:avg,'class':'avg-line'});
add(priceChart,'polyline',{points:price,'class':'line'});

bars(leftUp,42,503,1413,'#e53030','#f26464');
bars(leftDown,36,506,48,'#e53030','#e53030');
bars(rightDown,2070,2230,48,'#359a20','#65b954');
bars(rightUp,2070,2230,1413,'#359a20','#65b954');
rect(112,1140,7,273,'#8f5a5a');
rect(133,1117,7,296,'#4f9a20');

volume.split(' ').forEach((v,i)=>{
	var h=+v.slice(1);
	rect(521+i*6.36,696-h,4,h,colors[v[0]]);
});
add(indexChart,'polyline',{points:today,'class':'line'});
add(indexChart,'polyline',{points:yesterday,'class':'avg-line'});
```
